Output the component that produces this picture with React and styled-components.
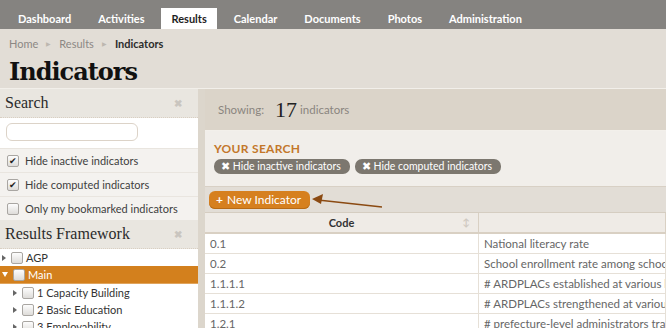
import React from "react";
import styled, { createGlobalStyle } from "styled-components";

const GlobalStyle = createGlobalStyle`
  body {
    margin: 0;
    background: #e2ddd6;
    font-family: Lato, "Open Sans", sans-serif;
    overflow: hidden;
  }
`;

const Page = styled.div`
  width: 666px;
  height: 328px;
  overflow: hidden;
  position: relative;
`;

const NavBar = styled.div`
  height: 29px;
  background: #858380;
  display: flex;
  align-items: flex-end;
  gap: 7px;
  padding-left: 8px;
`;

const NavTab = styled.div`
  height: 21px;
  line-height: 21px;
  padding: 0 10px;
  font-size: 11px;
  font-weight: 700;
  color: ${(p) => (p.active ? "#1e1e1e" : "#fff")};
  background: ${(p) => (p.active ? "#fff" : "transparent")};
`;

const Crumbs = styled.div`
  display: flex;
  align-items: center;
  gap: 8px;
  padding-left: 9px;
  height: 29px;
  font-size: 11px;
  color: #8c8884;
`;

const CrumbSep = styled.span`
  font-size: 6px;
  color: #bdb7af;
`;

const CrumbCurrent = styled.span`
  color: #2c2c2c;
  font-weight: 700;
`;

const Title = styled.h1`
  margin: 0;
  padding: 0 0 0 9px;
  height: 30px;
  line-height: 27px;
  font-family: "DejaVu Serif", serif;
  font-size: 24px;
  font-weight: 700;
  letter-spacing: -1px;
  color: #111;
`;

const Body = styled.div`
  display: flex;
  border-top: 1px solid #f2efea;
`;

const Sidebar = styled.div`
  width: 198px;
  flex-shrink: 0;
  background: #fff;
`;

const Gutter = styled.div`
  width: 7px;
  flex-shrink: 0;
  background: #dcd6cc;
`;

const PanelHead = styled.div`
  height: 28px;
  display: flex;
  align-items: center;
  justify-content: space-between;
  padding: 0 16px 0 5px;
  background: #e9e6e0;
  border-bottom: 1px dotted #d9cfc2;
  font-family: "Liberation Serif", serif;
  font-size: 16px;
  color: #2b2b2b;
`;

const CloseX = styled.span`
  font-family: "Liberation Sans", sans-serif;
  font-size: 10px;
  font-weight: 700;
  color: #c9c5bf;
`;

const InputRow = styled.div`
  height: 30px;
  padding: 5px 0 0 6px;
  box-sizing: border-box;
  background: #fff;
`;

const SearchInput = styled.div`
  width: 132px;
  height: 18px;
  box-sizing: border-box;
  border: 1px solid #dcd3c8;
  border-radius: 6px;
  background: #fff;
`;

const CheckRow = styled.div`
  height: 24px;
  display: flex;
  align-items: center;
  gap: 6px;
  padding-left: 7px;
  background: #f4f2ef;
  border-top: 1px solid #e9e5df;
  box-sizing: border-box;
  white-space: nowrap;
  font-size: 11px;
  color: #3e3e3e;
`;

const Box = styled.span`
  width: 10px;
  height: 10px;
  flex-shrink: 0;
  border: 1px solid #a9a6a2;
  border-radius: 2px;
  background: linear-gradient(#fdfdfd, #dedcd9);
  display: flex;
  align-items: center;
  justify-content: center;
  font-size: 9px;
  line-height: 1;
  color: #222;
`;

const TreeRow = styled.div`
  height: 17px;
  display: flex;
  align-items: center;
  gap: 3px;
  padding-left: ${(p) => 2 + p.level * 11}px;
  font-size: 11px;
  white-space: nowrap;
  color: ${(p) => (p.active ? "#fff" : "#333")};
  background: ${(p) => (p.active ? "#d3801d" : "transparent")};
  border-bottom: ${(p) => (p.active ? "1px solid #e0a45c" : "none")};
`;

const Caret = styled.span`
  width: 0;
  height: 0;
  border-style: solid;
  ${(p) =>
    p.open
      ? "border-width: 5px 3.5px 0 3.5px; border-color: #fff transparent transparent transparent;"
      : "border-width: 3.5px 0 3.5px 4px; border-color: transparent transparent transparent #666;"}
  margin-right: 2px;
`;

const Main = styled.div`
  flex: 1;
  min-width: 0;
`;

const ShowingBar = styled.div`
  height: 41px;
  display: flex;
  align-items: center;
  padding-left: 13px;
  background: #dbd4c9;
  border-bottom: 1px solid #f3f0eb;
  font-size: 11.5px;
  color: #8a857f;
`;

const Count = styled.span`
  margin: 0 3px 0 11px;
  font-family: "Liberation Serif", serif;
  font-size: 22px;
  color: #222;
`;

const YourSearch = styled.div`
  height: 55px;
  box-sizing: border-box;
  padding: 10px 0 0 9px;
  background: #f1eeea;
`;

const SearchLabel = styled.div`
  font-size: 12px;
  font-weight: 700;
  letter-spacing: 0.3px;
  color: #c3772a;
  margin-bottom: 3px;
`;

const Pills = styled.div`
  display: flex;
  gap: 5px;
`;

const Pill = styled.span`
  height: 15px;
  line-height: 15px;
  padding: 0 9px 0 7px;
  border-radius: 7px;
  background: #7c776f;
  color: #fff;
  font-size: 10.5px;
`;

const Toolbar = styled.div`
  height: 26px;
  box-sizing: border-box;
  display: flex;
  align-items: center;
  padding-left: 4px;
  background: #e2ddd6;
  border-top: 1px solid #d8d0c5;
`;

const NewButton = styled.button`
  height: 18px;
  padding: 0 9px 0 7px;
  border: none;
  border-radius: 6px;
  background: #d6801f;
  box-shadow: inset 0 -1px 0 #b86a14;
  color: #fff;
  font-family: Lato, sans-serif;
  font-size: 12px;
  line-height: 18px;
  display: flex;
  align-items: center;
  gap: 4px;
`;

const Table = styled.div`
  background: #fff;
  font-size: 11.5px;
  color: #666;
`;

const HeadRow = styled.div`
  display: grid;
  grid-template-columns: 274px 1fr;
  height: 19px;
  background: #efebe6;
  border-top: 1px solid #d5cdc1;
  border-bottom: 2px solid #d9d0c3;
`;

const HeadCell = styled.div`
  position: relative;
  display: flex;
  align-items: center;
  justify-content: center;
  font-size: 11px;
  font-weight: 700;
  color: #333;
  border-right: 1px solid #d9d0c3;
`;

const SortIcon = styled.span`
  position: absolute;
  right: 8px;
  top: 3px;
  font-size: 10px;
  color: #cfc9c1;
`;

const Row = styled.div`
  display: grid;
  grid-template-columns: 274px 1fr;
  height: 20px;
  border-bottom: 1px solid #e6e0d7;
  box-sizing: border-box;
`;

const Cell = styled.div`
  padding-left: 5px;
  line-height: 19px;
  white-space: nowrap;
  overflow: hidden;
  border-right: 1px solid #e6e0d7;
`;

const ArrowSvg = styled.svg`
  position: absolute;
  left: 310px;
  top: 194px;
`;

const rows = [
  ["0.1", "National literacy rate"],
  ["0.2", "School enrollment rate among school-aged children"],
  ["1.1.1.1", "# ARDPLACs established at various levels"],
  ["1.1.1.2", "# ARDPLACs strengthened at various levels"],
  ["1.2.1", "# prefecture-level administrators trained"],
];

const tree = [
  { level: 0, label: "AGP" },
  { level: 0, label: "Main", active: true, open: true },
  { level: 1, label: "1 Capacity Building" },
  { level: 1, label: "2 Basic Education" },
  { level: 1, label: "3 Employability" },
];

export default function App() {
  return (
    <Page>
      <GlobalStyle />
      <NavBar>
        {["Dashboard", "Activities", "Results", "Calendar", "Documents", "Photos", "Administration"].map((t) => (
          <NavTab key={t} active={t === "Results"}>
            {t}
          </NavTab>
        ))}
      </NavBar>
      <Crumbs>
        <span>Home</span>
        <CrumbSep>▶</CrumbSep>
        <span>Results</span>
        <CrumbSep>▶</CrumbSep>
        <CrumbCurrent>Indicators</CrumbCurrent>
      </Crumbs>
      <Title>Indicators</Title>
      <Body>
        <Sidebar>
          <PanelHead>
            Search
            <CloseX>✖</CloseX>
          </PanelHead>
          <InputRow>
            <SearchInput />
          </InputRow>
          <CheckRow>
            <Box>✔</Box>Hide inactive indicators
          </CheckRow>
          <CheckRow>
            <Box>✔</Box>Hide computed indicators
          </CheckRow>
          <CheckRow>
            <Box />Only my bookmarked indicators
          </CheckRow>
          <PanelHead>
            Results Framework
            <CloseX>✖</CloseX>
          </PanelHead>
          {tree.map((n) => (
            <TreeRow key={n.label} level={n.level} active={n.active}>
              <Caret open={n.open} />
              <Box />
              {n.label}
            </TreeRow>
          ))}
        </Sidebar>
        <Gutter />
        <Main>
          <ShowingBar>
            Showing:<Count>17</Count>indicators
          </ShowingBar>
          <YourSearch>
            <SearchLabel>YOUR SEARCH</SearchLabel>
            <Pills>
              <Pill>✖ Hide inactive indicators</Pill>
              <Pill>✖ Hide computed indicators</Pill>
            </Pills>
          </YourSearch>
          <Toolbar>
            <NewButton>
              <b>+</b> New Indicator
            </NewButton>
          </Toolbar>
          <Table>
            <HeadRow>
              <HeadCell>
                Code<SortIcon>↕</SortIcon>
              </HeadCell>
              <HeadCell />
            </HeadRow>
            {rows.map(([c, n]) => (
              <Row key={c}>
                <Cell>{c}</Cell>
                <Cell>{n}</Cell>
              </Row>
            ))}
          </Table>
        </Main>
      </Body>
      <ArrowSvg width="75" height="16" viewBox="0 0 75 16">
        <line x1="8" y1="6" x2="72" y2="13" stroke="#8b4a12" strokeWidth="1.6" />
        <polygon points="2,5 13,0 11,10" fill="#8b4a12" />
      </ArrowSvg>
    </Page>
  );
}
